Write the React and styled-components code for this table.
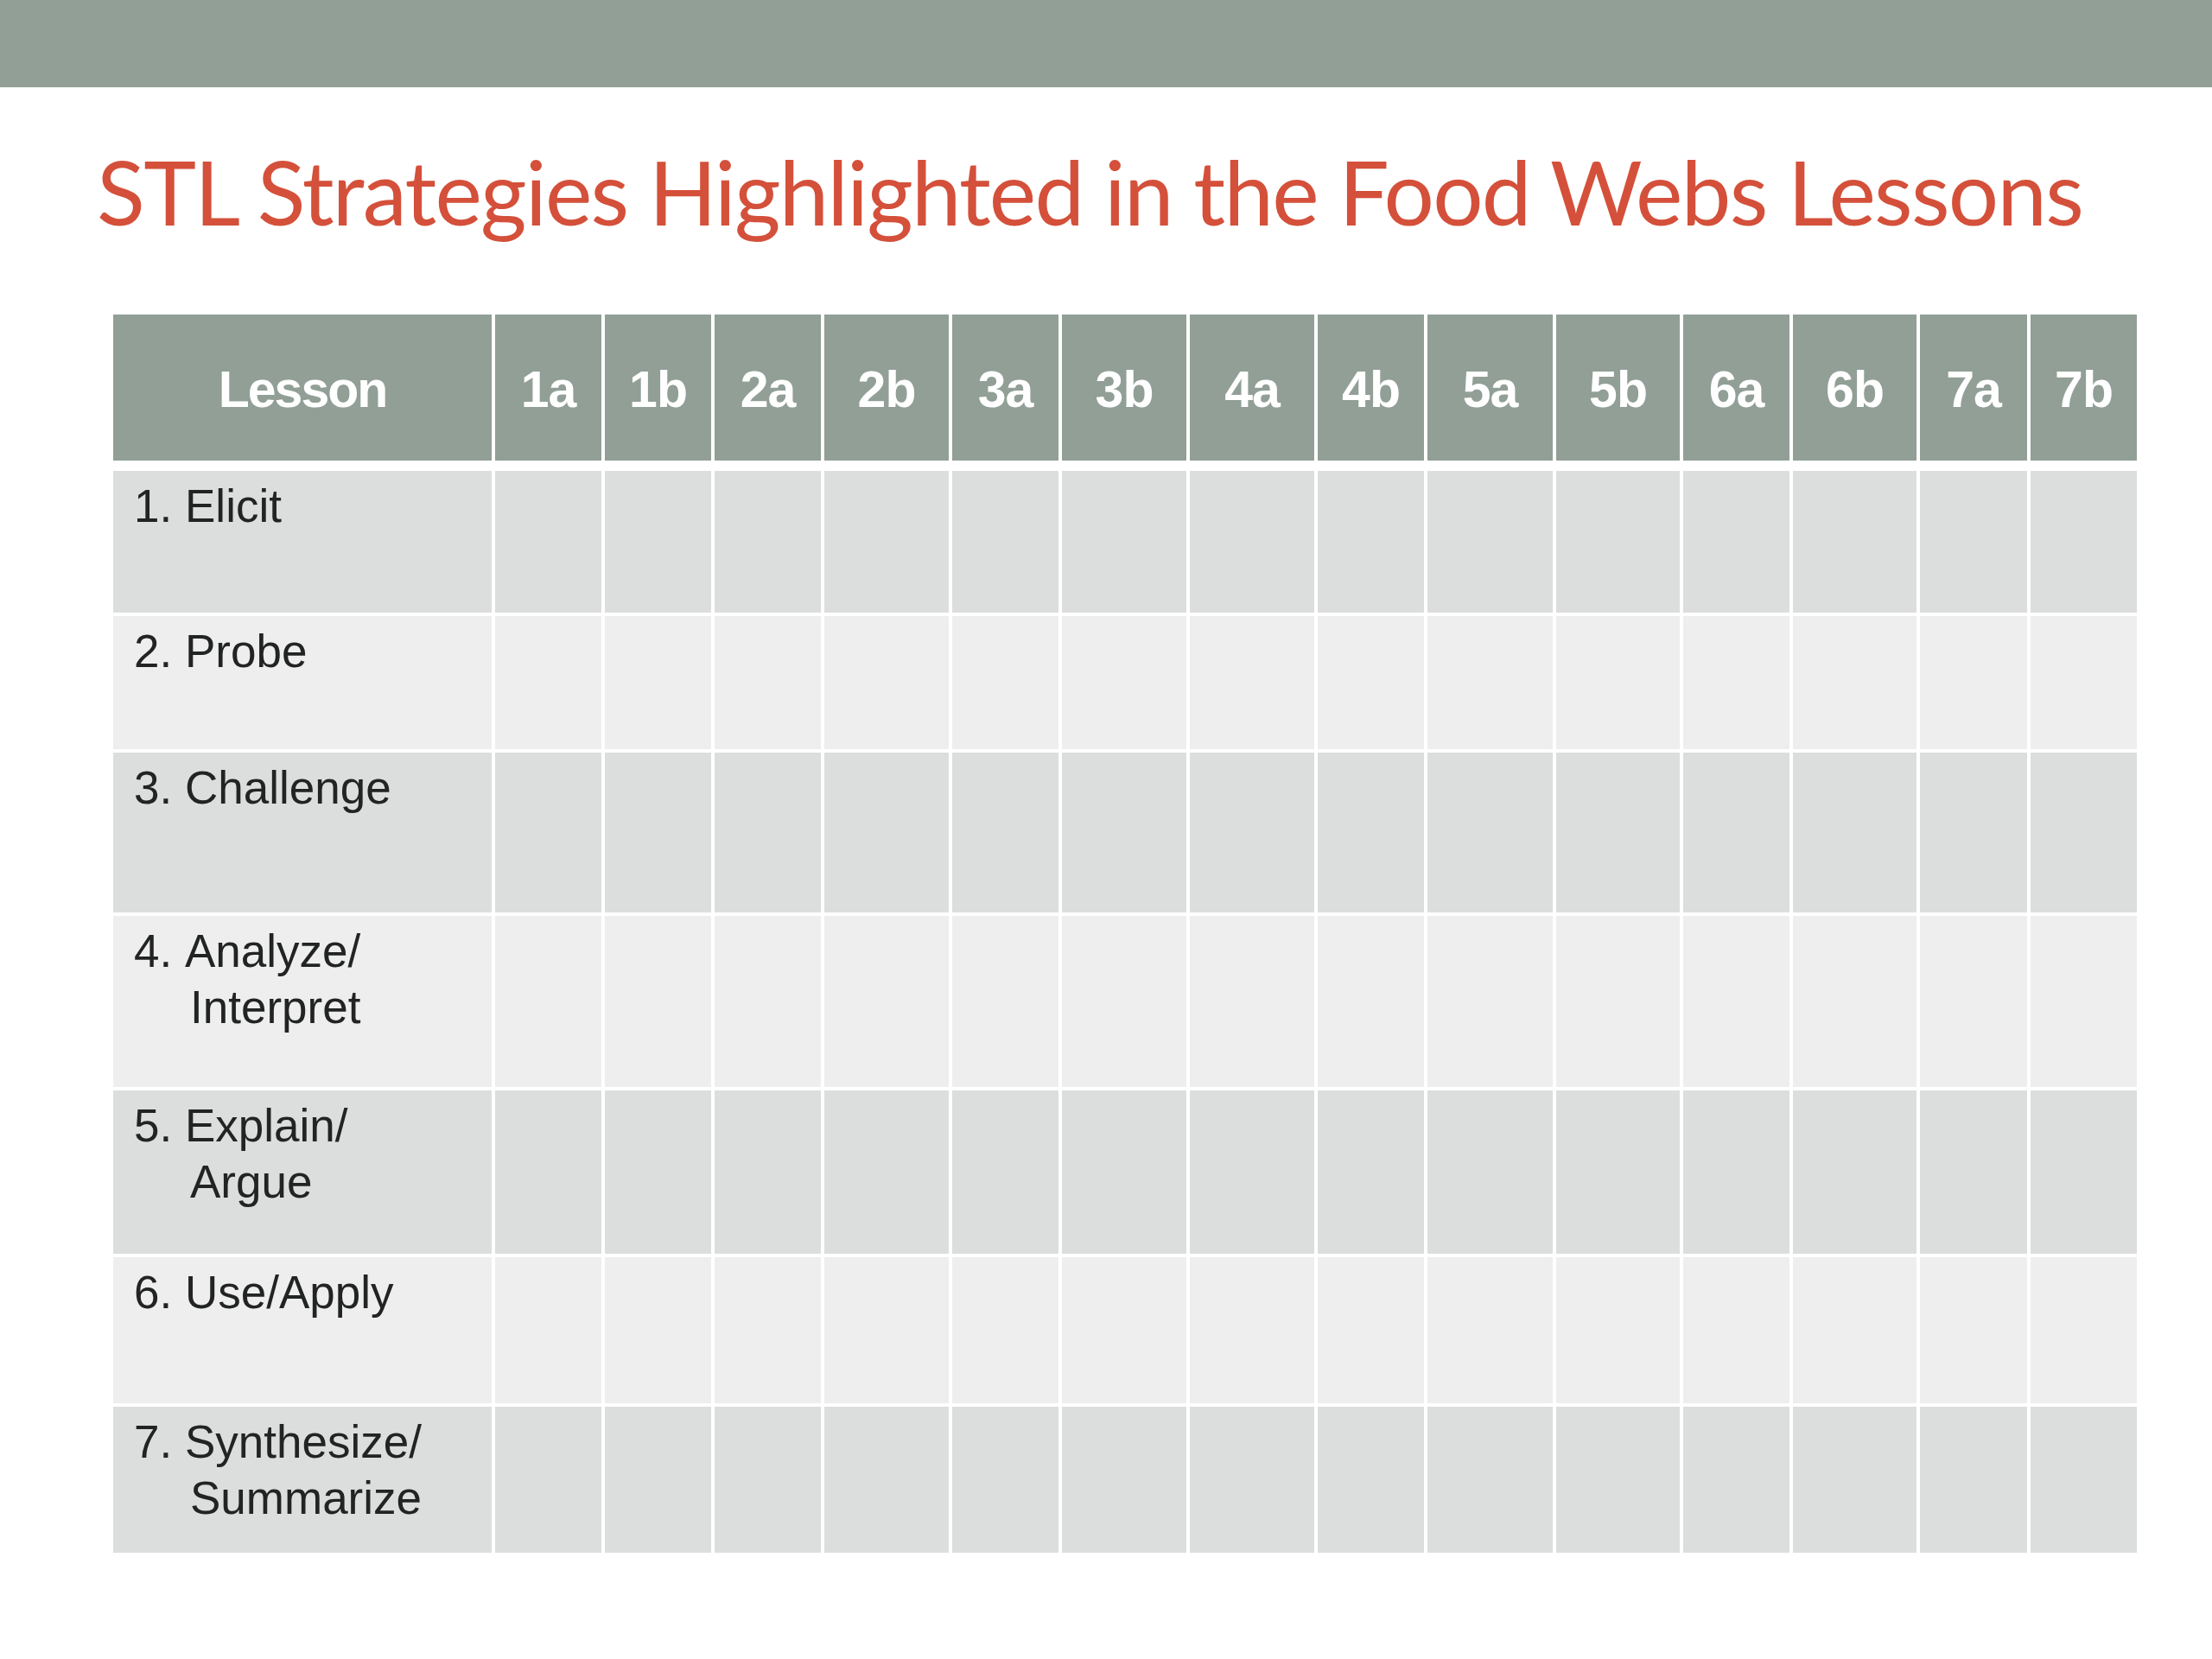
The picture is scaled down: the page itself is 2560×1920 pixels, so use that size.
import React from "react";
import styled, { createGlobalStyle } from "styled-components";

const Global = createGlobalStyle`
  html, body { margin: 0; padding: 0; background: #ffffff; }
  body { width: 2560px; height: 1920px; overflow: hidden; }
`;

const Slide = styled.div`
  width: 2560px;
  height: 1920px;
  background: #ffffff;
  display: flex;
  flex-direction: column;
`;

const TopBar = styled.div`
  height: 101px;
  background: #919f97;
  flex-shrink: 0;
`;

const Title = styled.h1`
  margin: 69px 0 0 112px;
  font-family: Lato, "Open Sans", sans-serif;
  font-weight: 400;
  font-size: 103px;
  line-height: 103px;
  color: #d4503a;
  letter-spacing: -1.75px;
  white-space: nowrap;
`;

const Table = styled.div`
  margin: 91px 0 0 131px;
  width: 2341px;
  display: grid;
  grid-template-columns: ${(p) => p.$cols};
  grid-template-rows: 177px 164px 154px 185px 198px 189px 169px 169px;
  column-gap: 4px;
  row-gap: 4px;
`;

const HeadCell = styled.div`
  background: #919f97;
  color: #ffffff;
  font-family: "Liberation Sans", Arial, sans-serif;
  font-weight: 700;
  font-size: 59px;
  letter-spacing: ${(p) => (p.$wide ? "-2px" : "-1px")};
  display: flex;
  align-items: center;
  justify-content: center;
  margin-bottom: 8px;
  padding-top: 4px;
`;

const Cell = styled.div`
  background: ${(p) => (p.$odd ? "#dcdedd" : "#edeeed")};
`;

const LabelCell = styled(Cell)`
  display: flex;
  padding: 8px 0 0 24px;
  font-family: "Liberation Sans", Arial, sans-serif;
  font-size: 53px;
  line-height: 65px;
  color: #222424;
`;

const Num = styled.span`
  width: 59px;
  flex-shrink: 0;
  white-space: pre;
`;

const Words = styled.span`
  display: flex;
  flex-direction: column;
  white-space: nowrap;
`;

const Line = styled.span`
  padding-left: ${(p) => (p.$cont ? "6px" : "0")};
`;

const columns = [
  ["1a", 123], ["1b", 123], ["2a", 123], ["2b", 144], ["3a", 123], ["3b", 144],
  ["4a", 144], ["4b", 123], ["5a", 145], ["5b", 143], ["6a", 123], ["6b", 143],
  ["7a", 124], ["7b", 123],
];

const rows = [
  ["1.", ["Elicit"]],
  ["2.", ["Probe"]],
  ["3.", ["Challenge"]],
  ["4.", ["Analyze/", "Interpret"]],
  ["5.", ["Explain/", "Argue"]],
  ["6.", ["Use/Apply"]],
  ["7.", ["Synthesize/", "Summarize"]],
];

export default function App() {
  const cols = ["438px", ...columns.map(([, w]) => `${w}px`)].join(" ");
  return (
    <Slide>
      <Global />
      <TopBar />
      <Title>STL Strategies Highlighted in the Food Webs Lessons</Title>
      <Table $cols={cols}>
        <HeadCell $wide>Lesson</HeadCell>
        {columns.map(([c]) => (
          <HeadCell key={c}>{c}</HeadCell>
        ))}
        {rows.map(([n, words], i) => (
          <React.Fragment key={n}>
            <LabelCell $odd={i % 2 === 0}>
              <Num>{n}</Num>
              <Words>
                {words.map((w, j) => (
                  <Line key={w} $cont={j > 0}>
                    {w}
                  </Line>
                ))}
              </Words>
            </LabelCell>
            {columns.map(([c]) => (
              <Cell key={c} $odd={i % 2 === 0} />
            ))}
          </React.Fragment>
        ))}
      </Table>
    </Slide>
  );
}
